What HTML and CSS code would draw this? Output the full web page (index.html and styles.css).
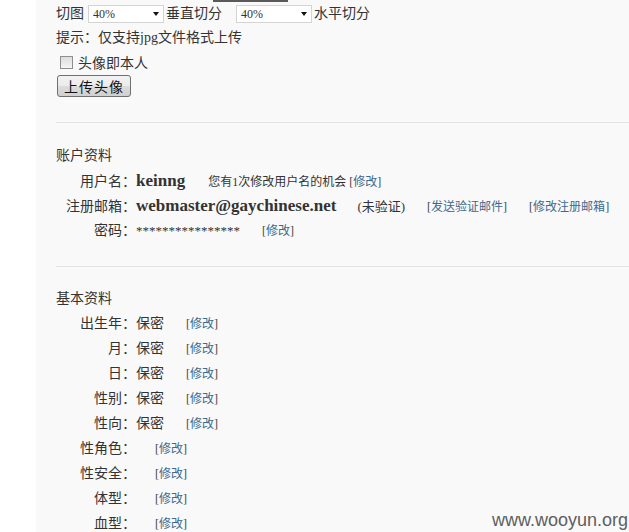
FILE: index.html
```html
<!DOCTYPE html>
<html lang="zh-CN">
<head>
<meta charset="utf-8">
<title>个人资料</title>
<link rel="stylesheet" href="styles.css">
</head>
<body>
<div class="page">
  <div class="gutter"></div>
  <main class="main">
    <div class="preview-edge"></div>
    <div class="cut-row">
      <span>切图</span>
      <div class="select"><span>40%</span><i class="arrow"></i></div>
      <span class="after-select">垂直切分</span>
      <div class="select second"><span>40%</span><i class="arrow"></i></div>
      <span class="after-select">水平切分</span>
    </div>
    <div class="hint">提示：仅支持jpg文件格式上传</div>
    <label class="check-row"><span class="checkbox"></span><span>头像即本人</span></label>
    <button class="btn" type="button">上传头像</button>

    <hr class="sep first">

    <h3 class="section-title">账户资料</h3>
    <div class="account">
      <div class="row">
        <span class="label">用户名：</span>
        <span class="strong">keinng</span>
        <span class="note">您有1次修改用户名的机会 <a class="link" href="#"><b>[</b>修改<b>]</b></a></span>
      </div>
      <div class="row">
        <span class="label">注册邮箱：</span>
        <span class="strong">webmaster@gaychinese.net</span>
        <span class="status">(未验证)</span>
        <a class="link gap" href="#"><b>[</b>发送验证邮件<b>]</b></a>
        <a class="link gap" href="#"><b>[</b>修改注册邮箱<b>]</b></a>
      </div>
      <div class="row">
        <span class="label">密码：</span>
        <span class="stars">****************</span>
        <a class="link gap" href="#"><b>[</b>修改<b>]</b></a>
      </div>
    </div>

    <hr class="sep second">

    <h3 class="section-title">基本资料</h3>
    <div class="basic">
      <div class="row"><span class="label">出生年：</span><span>保密</span><a class="link gap" href="#"><b>[</b>修改<b>]</b></a></div>
      <div class="row"><span class="label">月：</span><span>保密</span><a class="link gap" href="#"><b>[</b>修改<b>]</b></a></div>
      <div class="row"><span class="label">日：</span><span>保密</span><a class="link gap" href="#"><b>[</b>修改<b>]</b></a></div>
      <div class="row"><span class="label">性别：</span><span>保密</span><a class="link gap" href="#"><b>[</b>修改<b>]</b></a></div>
      <div class="row"><span class="label">性向：</span><span>保密</span><a class="link gap" href="#"><b>[</b>修改<b>]</b></a></div>
      <div class="row"><span class="label">性角色：</span><a class="link bare" href="#"><b>[</b>修改<b>]</b></a></div>
      <div class="row"><span class="label">性安全：</span><a class="link bare" href="#"><b>[</b>修改<b>]</b></a></div>
      <div class="row"><span class="label">体型：</span><a class="link bare" href="#"><b>[</b>修改<b>]</b></a></div>
      <div class="row"><span class="label">血型：</span><a class="link bare" href="#"><b>[</b>修改<b>]</b></a></div>
    </div>
  </main>
</div>
<div class="watermark">www.wooyun.org</div>
</body>
</html>
```

FILE: styles.css
```css
html, body {
  margin: 0;
  padding: 0;
  height: 100%;
  overflow: hidden;
  background: #ffffff;
}

body {
  font-family: "Liberation Serif", "Noto Sans CJK SC", serif;
  font-size: 14px;
  color: #333333;
}

.page {
  display: flex;
  min-height: 100%;
}

.gutter {
  width: 36px;
  flex: none;
  background: #ffffff;
}

.main {
  flex: 1;
  background: #f9f9f9;
  padding-left: 20px;
}

.preview-edge {
  width: 75px;
  height: 2px;
  margin-left: 157px;
  background: #5a5a5a;
}

.cut-row {
  display: flex;
  align-items: center;
  height: 18px;
  margin-top: 3px;
  line-height: 18px;
}

.select {
  height: 16px;
  border: 1px solid #d4d4d4;
  background: #ffffff;
  margin-left: 4px;
  display: flex;
  align-items: center;
  justify-content: space-between;
  padding: 0 3px 0 4px;
  width: 67px;
  font-size: 12px;
  font-family: "Liberation Serif", serif;
  color: #333;
}

.select.second {
  margin-left: 14px;
}

.arrow {
  width: 0;
  height: 0;
  border-left: 3.5px solid transparent;
  border-right: 3.5px solid transparent;
  border-top: 4px solid #111;
  margin-right: 1px;
}

.after-select {
  margin-left: 2px;
}

.hint {
  margin-top: 3px;
  height: 24px;
  line-height: 24px;
}

.check-row {
  display: flex;
  align-items: center;
  height: 24px;
}

.checkbox {
  width: 11px;
  height: 11px;
  border: 1px solid #8e8f8f;
  background: linear-gradient(#dcdcdc, #f6f6f6);
  margin-left: 4px;
  margin-right: 5px;
}

.btn {
  display: block;
  margin: 1px 0 0 1px;
  width: 74px;
  height: 22px;
  padding: 0;
  border: 1px solid #707070;
  border-radius: 3px;
  background: linear-gradient(#f2f2f2 0%, #ebebeb 50%, #dddddd 51%, #cfcfcf 100%);
  font-family: "Noto Sans CJK SC", sans-serif;
  font-size: 14px;
  color: #111;
  line-height: 20px;
  letter-spacing: 1px;
}

.sep {
  border: 0;
  height: 1px;
  background: #e4e4e4;
  margin: 0;
}

.sep.first {
  margin-top: 25px;
}

.sep.second {
  margin-top: 23px;
}

.section-title {
  margin: 21px 0 0 0;
  font-weight: normal;
  font-size: 14px;
  height: 24px;
  line-height: 24px;
}

.sep.second + .section-title {
  margin-top: 20px;
}

.account .row,
.basic .row {
  display: flex;
  align-items: baseline;
  height: 25px;
  line-height: 25px;
  white-space: nowrap;
}

.label {
  width: 80px;
  flex: none;
  text-align: right;
}

.strong {
  font-family: "Liberation Serif", serif;
  font-weight: bold;
  font-size: 17px;
  color: #333;
}

.note {
  margin-left: 23px;
  font-size: 12px;
}

.status {
  margin-left: 21px;
  font-size: 13px;
}

.stars {
  font-family: "Liberation Serif", serif;
  font-size: 13px;
}

.link {
  font-size: 12px;
  color: #3b6a8d;
  text-decoration: none;
}

.link b {
  font-weight: normal;
  color: #444;
}

.link.gap {
  margin-left: 22px;
}

.link.bare {
  margin-left: 19px;
}

.watermark {
  position: absolute;
  right: 1px;
  bottom: 2px;
  font-family: "Liberation Sans", Arial, sans-serif;
  font-size: 18px;
  line-height: 20px;
  color: #5e5e5e;
}
```
